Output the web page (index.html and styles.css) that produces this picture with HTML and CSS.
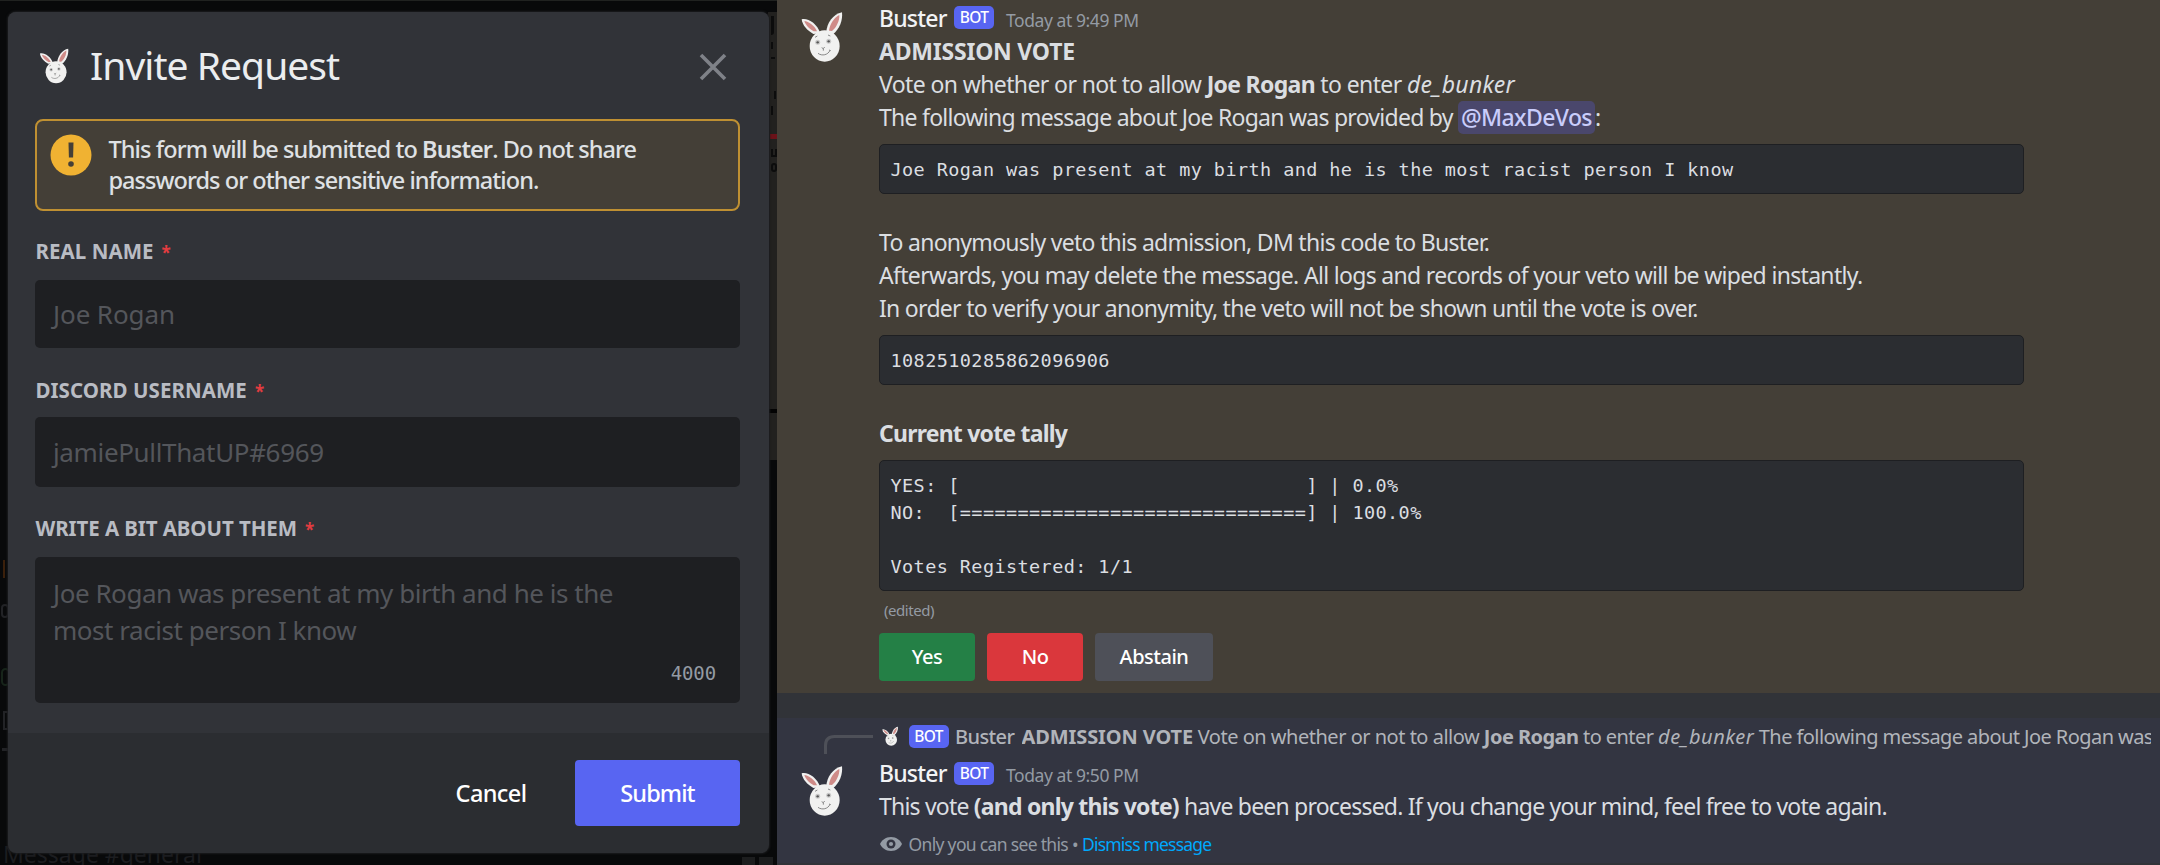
FILE: index.html
```html
<!DOCTYPE html>
<html lang="en">
<head>
<meta charset="utf-8">
<title>Invite Request</title>
<link rel="stylesheet" href="styles.css">
</head>
<body>
<svg class="defs" width="0" height="0">
  <symbol id="rabbit" viewBox="0 0 180 210">
    <path d="M52 102C34 92 19 76 17 58c18-5 46 12 56 42z" fill="#f1f1f0"/>
    <path d="M53 94C40 87 28 74 25 63c13 1 31 14 38 31z" fill="#cf8b88"/>
    <path d="M91 98c0-27 21-57 47-61 3 24-8 51-27 66z" fill="#f1f1f0"/>
    <path d="M99 92c2-19 16-40 31-47 1 17-9 38-22 48z" fill="#cf8b88"/>
    <ellipse cx="86" cy="138" rx="45" ry="47" fill="#f1f1f0"/>
    <circle cx="65" cy="127" r="7.5" fill="#c8c8c8"/><circle cx="98" cy="124" r="7.5" fill="#c8c8c8"/>
    <circle cx="65" cy="127" r="3.5" fill="#555"/><circle cx="98" cy="124" r="3.5" fill="#555"/>
    <path d="M57 112l7-4M96 105l7 3M77 143l5 3 4-5M82 146v6M66 160c12 9 30 5 36-9M99 150l5 2" fill="none" stroke="#777" stroke-width="2.6"/>
  </symbol>
</svg>
<div class="app">
  <section class="stage">
    <div class="backdrop" aria-hidden="true">
      <i class="bar b1"></i><i class="bar b2"></i><i class="bar b3"></i>
      <i class="bar f1"></i><i class="bar f2"></i><i class="bar f3"></i><i class="bar f4"></i><i class="bar f5"></i><i class="bar red"></i><i class="bar f6"></i><i class="bar f7"></i>
      <i class="bar orange"></i><i class="bar l3"></i><i class="bar l4"></i><i class="bar l1"></i><i class="bar l2"></i>
      <span class="bit general">Message #general</span>
      <i class="bar sq1"></i><i class="bar sq2"></i>
    </div>
    <form class="modal">
      <div class="modal-body">
        <header class="modal-head">
          <svg class="rabbit-md"><use href="#rabbit"/></svg>
          <h1>Invite Request</h1>
          <svg class="close" viewBox="0 0 28 28"><path d="M2 2L26 26M26 2L2 26" stroke="#7f8288" stroke-width="3.6"/></svg>
        </header>
        <div class="warning">
          <svg class="warn-icon" viewBox="0 0 42 42"><circle cx="21" cy="21" r="20.5" fill="#f0b232"/><path d="M18.5 8.5h5l-.4 15h-4.200z" fill="#443f37"/><circle cx="21" cy="30" r="2.8" fill="#443f37"/></svg>
          <p><span class="w1">This form will be submitted to <b>Buster</b>. Do not share</span><br><span class="w2">passwords or other sensitive information.</span></p>
        </div>
        <label>REAL NAME<em>*</em></label>
        <div class="input">Joe Rogan</div>
        <label class="second">DISCORD USERNAME<em>*</em></label>
        <div class="input tall">jamiePullThatUP#6969</div>
        <label class="third">WRITE A BIT ABOUT THEM<em>*</em></label>
        <div class="input area">Joe Rogan was present at my birth and he is the<br>most racist person I know<span class="count">4000</span></div>
      </div>
      <footer>
        <button type="button" class="cancel">Cancel</button>
        <button type="button" class="submit">Submit</button>
      </footer>
    </form>
  </section>
  <main class="chat">
    <article class="message mentioned">
      <svg class="avatar"><use href="#rabbit"/></svg>
      <div class="content">
        <div class="head"><span class="name">Buster</span><span class="bot">BOT</span><time>Today at 9:49 PM</time></div>
        <p><b class="caps">ADMISSION VOTE</b></p>
        <p class="intro">Vote on whether or not to allow <b>Joe Rogan</b> to enter <i>de_bunker</i></p>
        <p><span class="following">The following message about Joe Rogan was provided by </span><span class="mention">@MaxDeVos</span>:</p>
        <pre>Joe Rogan was present at my birth and he is the most racist person I know</pre>
        <p class="gap">To anonymously veto this admission, DM this code to Buster.</p>
        <p class="after">Afterwards, you may delete the message. All logs and records of your veto will be wiped instantly.</p>
        <p>In order to verify your anonymity, the veto will not be shown until the vote is over.</p>
        <pre>1082510285862096906</pre>
        <p class="gap"><b>Current vote tally</b></p>
        <pre>YES: [                              ] | 0.0%
NO:  [==============================] | 100.0%

Votes Registered: 1/1</pre>
        <div class="edited">(edited)</div>
        <div class="actions"><button class="yes">Yes</button><button class="no">No</button><button class="abstain">Abstain</button></div>
      </div>
    </article>
    <article class="ephemeral">
      <div class="reply">
        <svg class="spine" viewBox="0 0 50 20"><path d="M1.5 19V10.500Q1.500 1.500 10.500 1.500H49" fill="none" stroke="#4e5058" stroke-width="3"/></svg>
        <svg class="rabbit-sm"><use href="#rabbit"/></svg>
        <span class="bot">BOT</span>
        <span class="reply-name">Buster</span>
        <span class="reply-text"><b class="caps">ADMISSION VOTE</b> <span class="reply-intro">Vote on whether or not to allow</span> <b>Joe Rogan</b> to enter <i>de_bunker</i> The following message about Joe Rogan was</span>
      </div>
      <div class="message">
        <svg class="avatar"><use href="#rabbit"/></svg>
        <div class="content">
          <div class="head"><span class="name">Buster</span><span class="bot">BOT</span><time>Today at 9:50 PM</time></div>
          <p class="processed">This vote <b>(and only this vote)</b> have been processed. If you change your mind, feel free to vote again.</p>
          <div class="only">
            <svg class="eye" viewBox="0 0 22 14"><path d="M11 0C5.500 0 1.500 3.500 0 7c1.500 3.500 5.500 7 11 7s9.500-3.500 11-7C20.500 3.500 16.500 0 11 0z" fill="#949ba4"/><circle cx="11" cy="7" r="4.500" fill="#333541"/><circle cx="11" cy="7" r="2.100" fill="#949ba4"/></svg>
            <span>Only you can see this</span><span class="dot">•</span><a>Dismiss message</a>
          </div>
        </div>
      </div>
    </article>
  </main>
</div>
</body>
</html>
```

FILE: styles.css
```css
* { box-sizing: border-box; }
body { margin: 0; background: #313338; font-family: "Noto Sans", sans-serif; color: #dbdee1; }
p, h1, pre { margin: 0; }
button { border: 0; padding: 0; color: #fff; font-family: inherit; font-weight: 500; border-radius: 4px; }
svg { display: block; flex: none; }
.defs { position: absolute; }
.app { display: flex; width: 2160px; height: 865px; overflow: hidden; }

/* dimmed page behind the dialog */
.stage { position: relative; flex: none; width: 777px; height: 865px; padding: 12px 8px 0; background: #08090a; overflow: hidden; }
.backdrop { position: absolute; inset: 0; }
.bar, .bit { position: absolute; }
.b1 { left: 768px; top: 12px; width: 9px; height: 448px; background: #22211f; }
.b2 { left: 768px; top: 409px; width: 9px; height: 4px; background: #030303; }
.b3 { left: 0; top: 0; width: 777px; height: 1px; background: #202220; }
.f1, .f2, .f3, .f4, .f5, .f6, .f7 { left: 771px; width: 4px; background: #0c0c0c; }
.f1 { top: 16px; height: 19px; width: 3px; border-radius: 0 0 3px 0; }
.f2 { top: 42px; height: 7px; width: 2px; }
.f3 { top: 57px; height: 2px; }
.f4 { top: 91px; height: 8px; width: 2px; left: 774px; }
.f5 { top: 106px; height: 9px; width: 2px; }
.f6 { top: 149px; height: 8px; background: none; border: 2px solid #0c0c0c; border-top: 0; width: 6px; }
.f7 { top: 163px; height: 9px; background: none; border: 2px solid #0c0c0c; border-radius: 3px; width: 6px; }
.red { left: 770px; top: 134px; width: 7px; height: 5px; background: #6b1219; }
.orange { left: 3px; top: 560px; width: 2px; height: 18px; background: #3b200b; }
.l1 { left: 1px; top: 604px; width: 8px; height: 14px; border: 2px solid #222326; border-radius: 6px; }
.l2 { left: 1px; top: 668px; width: 9px; height: 18px; border: 2px solid #17241a; border-radius: 8px; }
.l3 { left: 3px; top: 711px; width: 6px; height: 19px; border: 2px solid #222326; }
.l4 { left: 2px; top: 748px; width: 6px; height: 3px; background: #222326; }
.general { left: 3px; top: 844px; color: #1c1d20; font-size: 23px; line-height: 21px; height: 21px; }
.sq1 { left: 742px; top: 857px; width: 13px; height: 8px; background: #1c1d1e; }
.sq2 { left: 759px; top: 857px; width: 14px; height: 8px; background: #1c1d1e; }

.modal { position: relative; width: 760.5px; height: 841px; border-radius: 8px; background: #2b2d31; box-shadow: 0 0 2px 1px #1b1c1e; overflow: hidden; }
.modal-body { height: 721px; padding: 0 28.500px 0 27px; background: #313338; }
.modal-head { display: flex; align-items: flex-start; height: 107px; }
.rabbit-md { width: 42px; height: 49px; margin: 28px 0 0 1px; }
h1 { margin-left: 12px; padding-top: 26px; flex: 1; font-size: 39px; line-height: 53px; font-weight: 400; letter-spacing: -.95px; color: #ebedef; }
.close { width: 28px; height: 28px; margin: 40.500px 13.500px 0 0; }
.warning { display: flex; height: 92px; padding: 13px 0 0 13px; border: 2px solid #bf9032; border-radius: 8px; background: #443f37; }
.warn-icon { width: 42px; height: 42px; }
.warning p { margin: 0 0 0 16.500px; font-size: 23.500px; line-height: 31px; font-weight: 500; color: #dfe1e4; }
.warning b { font-weight: 600; }
.w1 { letter-spacing: -.92px; }
.w2 { letter-spacing: -.95px; }
label { display: block; padding: 26px 0 0 .5px; height: 69px; color: #b9bcc3; font-size: 20.500px; line-height: 28px; font-weight: 700; letter-spacing: .06px; }
label em { margin-left: 8px; color: #e23c40; font-style: normal; font-size: 17px; line-height: 20px; }
.input { height: 68px; padding: 15.500px 18px 0; border-radius: 5px; background: #1e1f22; color: #54565b; font-size: 26px; line-height: 37px; letter-spacing: -.1px; }
.second { padding-top: 27.500px; }
.tall { height: 70px; padding-top: 16.500px; letter-spacing: -.35px; }
.third { height: 70px; padding-top: 27px; letter-spacing: -.08px; }
.area { height: 146px; padding-top: 17.500px; letter-spacing: -.46px; }
.count { display: block; padding-right: 6px; text-align: right; font: 19px/28px "DejaVu Sans Mono", monospace; letter-spacing: -.1px; color: #949ba4; margin-top: 10.500px; }
footer { display: flex; justify-content: flex-end; padding: 27px 28.500px 0 0; }
.cancel, .submit { height: 65.500px; font-size: 23.500px; letter-spacing: -.9px; }
.cancel { width: 120px; margin-right: 24px; background: none; letter-spacing: -.6px; }
.submit { width: 165px; background: #5865f2; }

.chat { width: 1383px; height: 865px; background: #313338; }
.message { display: grid; grid-template-columns: 102px 1145px; }
.mentioned { height: 693px; padding-top: 1.500px; background: #443f37; }
.avatar { width: 60px; height: 70px; margin: -1.500px 0 0 18.500px; }
.head { display: flex; height: 33px; line-height: 33px; }
.name { width: 68px; color: #f2f3f5; font-size: 23px; font-weight: 500; letter-spacing: -.8px; }
.bot { flex: none; width: 40px; height: 23px; border-radius: 5px; background: #5865f2; color: #fff; font-size: 15.500px; line-height: 22px; font-weight: 500; letter-spacing: -.6px; text-align: center; }
.head .bot { margin: 4.500px 12px 0 7px; }
time { padding-top: 2px; color: #949ba4; font-size: 17.500px; letter-spacing: -.43px; }
.content p { height: 33px; font-size: 23px; line-height: 33px; letter-spacing: -.71px; white-space: nowrap; }
.content p b { letter-spacing: -.78px; }
.content p b.caps { letter-spacing: -.22px; }
.content p.intro { letter-spacing: -.61px; }
.content p.intro b { letter-spacing: -.68px; }
.content p.intro i { letter-spacing: .3px; }
.content p .following { letter-spacing: -.74px; }
.content p.after { letter-spacing: -.68px; }
.content p.processed { letter-spacing: -.8px; }
.mention { display: inline-block; height: 33px; padding: 0 3px; border-radius: 5px; background: #4a476c; color: #c9cdfb; font-weight: 500; letter-spacing: -.6px; vertical-align: top; }
pre { margin-top: 10px; padding: 11.500px 10.500px 9.500px; border: 1px solid #1e1f22; border-radius: 5px; background: #2b2d31; font: 18.500px/27px "DejaVu Sans Mono", monospace; letter-spacing: .41px; }
.content p.gap { margin-top: 32px; }
.edited { padding-left: 5px; height: 42px; line-height: 38px; color: #949ba4; font-size: 15px; letter-spacing: -.46px; }
.actions { display: flex; gap: 12px; }
.actions button { height: 48px; width: 96px; font-size: 20px; letter-spacing: -.5px; }
.actions .yes { background: #248046; }
.actions .no { background: #da373c; }
.actions .abstain { width: 118px; background: #4e5058; }

.ephemeral { height: 145px; margin-top: 24.500px; padding-top: 3px; background: #333541; }
.reply { display: flex; height: 36.500px; padding: 0 9px 0 47px; color: #b1b4ba; font-size: 20px; line-height: 32px; white-space: nowrap; }
.spine { width: 50px; height: 20px; margin-top: 14px; }
.rabbit-sm { width: 23.500px; height: 27px; margin: 1px 0 0 5.500px; }
.reply .bot { margin: 4.500px 6.500px 0 5.500px; line-height: 22px; }
.reply-name { width: 66.500px; font-weight: 500; letter-spacing: -.6px; }
.reply-text { flex: 1; overflow: hidden; letter-spacing: -.57px; }
.reply-text b { letter-spacing: -.55px; }
.reply-text .caps { letter-spacing: -.1px; }
.reply-text .reply-intro { letter-spacing: -.49px; }
.reply-text i { letter-spacing: .5px; }
.ephemeral .avatar { margin-top: -3px; }
.only { display: flex; align-items: center; height: 41px; color: #949ba4; font-size: 17.500px; letter-spacing: -.67px; }
.eye { width: 22px; height: 14px; margin: 0 7px 0 .5px; }
.dot { margin: 0 4px 0 4px; }
.only a { color: #00a8fc; letter-spacing: -.8px; }
```
